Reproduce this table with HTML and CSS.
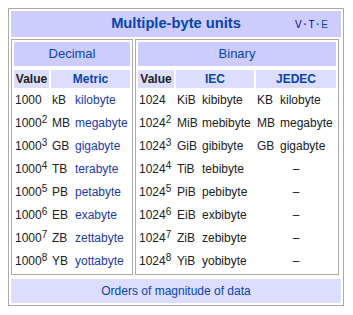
FILE: index.html
```html
<!DOCTYPE html>
<html>
<head>
<meta charset="utf-8">
<title>Multiple-byte units</title>
<link rel="stylesheet" href="styles.css">
</head>
<body>
<table class="navbox">
  <colgroup><col class="nb-left"><col class="nb-right"></colgroup>
  <tr>
    <th class="navbox-title" colspan="2">
      <div class="title-wrap">
        <a class="title-text" href="#">Multiple-byte units</a>
        <span class="vte"><a class="visited" href="#">V</a><span class="dot">·</span><a class="visited" href="#">T</a><span class="dot">·</span><a href="#">E</a></span>
      </div>
    </th>
  </tr>
  <tr>
    <td class="group">
      <table class="units units-dec">
        <colgroup><col class="d-val"><col class="d-unit"><col class="d-name"></colgroup>
        <tr><th class="grp-head" colspan="3"><a href="#">Decimal</a></th></tr>
        <tr><th class="sub-head">Value</th><th class="sub-head" colspan="2"><a href="#">Metric</a></th></tr>
        <tr><td>1000</td><td>kB</td><td><a class="name" href="#">kilobyte</a></td></tr>
        <tr><td>1000<sup>2</sup></td><td>MB</td><td><a class="name" href="#">megabyte</a></td></tr>
        <tr><td>1000<sup>3</sup></td><td>GB</td><td><a class="name" href="#">gigabyte</a></td></tr>
        <tr><td>1000<sup>4</sup></td><td>TB</td><td><a class="name" href="#">terabyte</a></td></tr>
        <tr><td>1000<sup>5</sup></td><td>PB</td><td><a class="name" href="#">petabyte</a></td></tr>
        <tr><td>1000<sup>6</sup></td><td>EB</td><td><a class="name" href="#">exabyte</a></td></tr>
        <tr><td>1000<sup>7</sup></td><td>ZB</td><td><a class="name" href="#">zettabyte</a></td></tr>
        <tr><td>1000<sup>8</sup></td><td>YB</td><td><a class="name" href="#">yottabyte</a></td></tr>
      </table>
    </td>
    <td class="group">
      <table class="units units-bin">
        <colgroup><col class="b-val"><col class="b-iu"><col class="b-in"><col class="b-ju"><col class="b-jn"></colgroup>
        <tr><th class="grp-head" colspan="5"><a href="#">Binary</a></th></tr>
        <tr><th class="sub-head">Value</th><th class="sub-head" colspan="2"><a href="#">IEC</a></th><th class="sub-head" colspan="2"><a href="#">JEDEC</a></th></tr>
        <tr><td>1024</td><td>KiB</td><td>kibibyte</td><td>KB</td><td>kilobyte</td></tr>
        <tr><td>1024<sup>2</sup></td><td>MiB</td><td>mebibyte</td><td>MB</td><td>megabyte</td></tr>
        <tr><td>1024<sup>3</sup></td><td>GiB</td><td>gibibyte</td><td>GB</td><td>gigabyte</td></tr>
        <tr><td>1024<sup>4</sup></td><td>TiB</td><td>tebibyte</td><td class="none" colspan="2">–</td></tr>
        <tr><td>1024<sup>5</sup></td><td>PiB</td><td>pebibyte</td><td class="none" colspan="2">–</td></tr>
        <tr><td>1024<sup>6</sup></td><td>EiB</td><td>exbibyte</td><td class="none" colspan="2">–</td></tr>
        <tr><td>1024<sup>7</sup></td><td>ZiB</td><td>zebibyte</td><td class="none" colspan="2">–</td></tr>
        <tr><td>1024<sup>8</sup></td><td>YiB</td><td>yobibyte</td><td class="none" colspan="2">–</td></tr>
      </table>
    </td>
  </tr>
  <tr>
    <td class="navbox-foot" colspan="2"><a href="#">Orders of magnitude of data</a></td>
  </tr>
</table>
</body>
</html>
```

FILE: styles.css
```css
html {
  background: #fff;
}

body {
  margin: 8px;
  font-family: "Liberation Sans", Arial, sans-serif;
  font-size: 12px;
  color: #202122;
}

a {
  color: #0645ad;
  text-decoration: none;
}

a.visited {
  color: #0b0080;
}

a.name {
  color: #1d3aa8;
}

/* outer navbox */
.navbox {
  width: 336px;
  table-layout: fixed;
  border: 1px solid #aaa;
  border-spacing: 2px;
}

.navbox th,
.navbox td {
  padding: 0;
}

.nb-left { width: 122px; }
.nb-right { width: 206px; }

.navbox-title {
  height: 25px;
  background: #ccf;
  vertical-align: top;
}

.title-wrap {
  display: grid;
  grid-template-columns: 1fr auto 1fr;
  align-items: baseline;
  line-height: 25px;
}

.title-text {
  grid-column: 2;
  font-size: 14.7px;
  font-weight: bold;
}

.vte {
  grid-column: 3;
  justify-self: end;
  margin-right: 13px;
  font-size: 10px;
  font-weight: normal;
  color: #0645ad;
}

.vte .dot {
  margin: 0 1.7px;
  font-weight: bold;
}

.group {
  vertical-align: top;
  padding-bottom: 2px !important;
}

/* inner unit tables */
.units {
  table-layout: fixed;
  border: 1px solid #aaa;
  border-spacing: 2px;
}

.units-dec { width: 122px; }
.units-bin { width: 204px; }

.d-val { width: 35px; }
.d-unit { width: 21px; }
.d-name { width: 56px; }

.b-val { width: 36px; }
.b-iu { width: 23px; }
.b-in { width: 53px; }
.b-ju { width: 21px; }
.b-jn { width: 57px; }

.units th,
.units td {
  padding: 0;
}

.grp-head {
  height: 26px;
  vertical-align: top;
  line-height: 24px;
  font-size: 13px;
  font-weight: normal;
  text-align: center;
  background: linear-gradient(#ccf, #ccf) top / 100% 24px no-repeat;
}

.sub-head {
  height: 18px;
  line-height: 18px;
  font-size: 12px;
  font-weight: bold;
  text-align: center;
  background: #ddf;
  color: #202122;
}

.units td {
  height: 21px;
  line-height: 21px;
  padding-left: 1px;
  white-space: nowrap;
  text-align: left;
  vertical-align: middle;
}

.units td.none {
  text-align: center;
  padding-left: 0;
}

sup {
  font-size: 10px;
  line-height: 0;
  vertical-align: 4px;
}

.navbox-foot {
  height: 24px;
  text-align: center;
  background: #ddf;
  vertical-align: middle;
}
```
